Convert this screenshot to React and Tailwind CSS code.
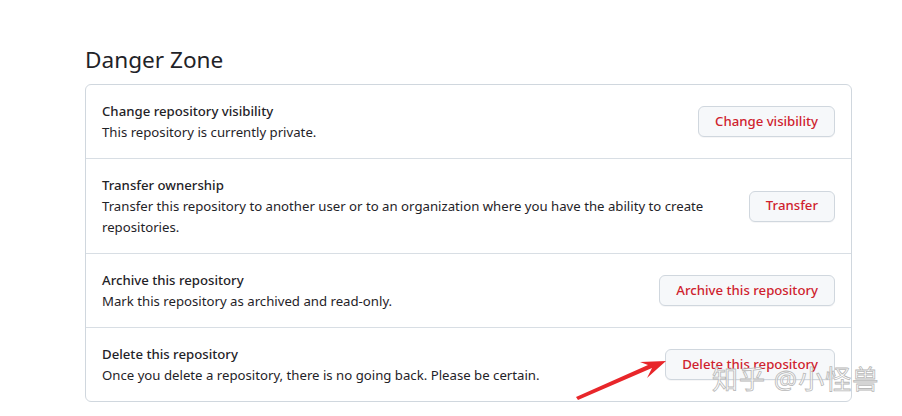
import React from 'react';

const rows = [
  {
    title: 'Change repository visibility',
    desc: 'This repository is currently private.',
    action: 'Change visibility',
  },
  {
    title: 'Transfer ownership',
    desc: 'Transfer this repository to another user or to an organization where you have the ability to create repositories.',
    action: 'Transfer',
  },
  {
    title: 'Archive this repository',
    desc: 'Mark this repository as archived and read-only.',
    action: 'Archive this repository',
  },
  {
    title: 'Delete this repository',
    desc: 'Once you delete a repository, there is no going back. Please be certain.',
    action: 'Delete this repository',
  },
];

const App = () => {
  return (
    <div
      className="relative w-[902px] h-[416px] bg-white overflow-hidden text-[#1f2328]"
      style={{ fontFamily: '"Noto Sans", "Noto Sans CJK SC", sans-serif' }}
    >
      <div className="pl-[85px] pr-[50px] pt-[42px]">
        <h2 className="text-[22.6px] leading-[36px] font-normal mb-[6px]">Danger Zone</h2>
        <div className="border border-[#d0d7de] rounded-[6px]">
          {rows.map((row, i) => (
            <div
              key={row.title}
              className={`flex items-center px-4 py-[15.5px] ${i > 0 ? 'border-t border-[#d8dee4]' : ''}`}
            >
              <div className="flex-1 pr-4">
                <div className="text-[13.2px] leading-[21px] font-medium">{row.title}</div>
                <div className="text-[13.2px] leading-[21px]">{row.desc}</div>
              </div>
              <button className="shrink-0 h-[31px] px-[16px] text-[13.2px] font-medium text-[#cf222e] bg-[#f6f8fa] border border-[#d0d7de] rounded-[6px] shadow-[0_1px_0_rgba(31,35,40,0.04)]">
                {row.action}
              </button>
            </div>
          ))}
        </div>
      </div>

      <svg
        className="absolute left-[572px] top-[350px]"
        width="100"
        height="54"
        viewBox="0 0 100 54"
      >
        <polygon points="6,50 80,18 75,28 94,11 68,12 76,15 4,47" fill="#e8262a" />
      </svg>

      <div
        className="absolute left-[712px] top-[362px] text-[26px] leading-[34px] text-white/60 tracking-[1px]"
        style={{ WebkitTextStroke: '0.8px #b8b8b8' }}
      >
        知乎 @小怪兽
      </div>
    </div>
  );
};

export default App;
